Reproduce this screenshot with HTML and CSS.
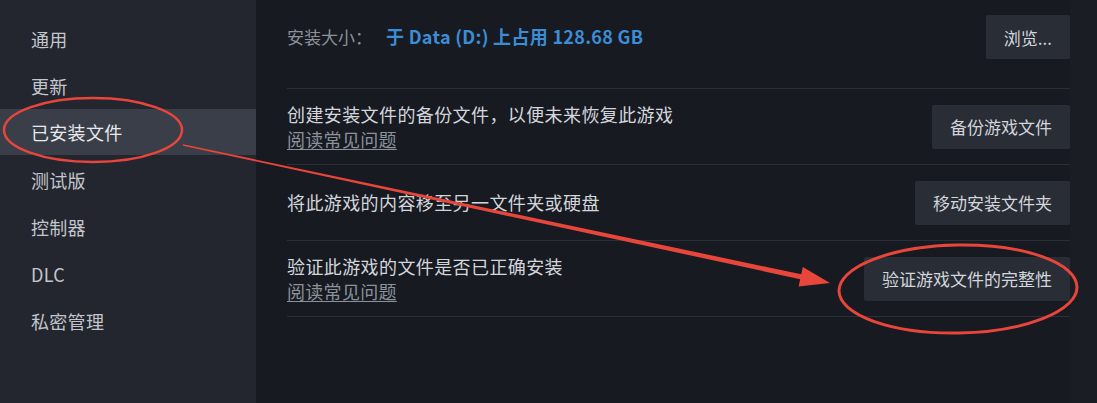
FILE: index.html
```html
<!DOCTYPE html>
<html lang="zh-CN">
<head>
<meta charset="utf-8">
<title>已安装文件</title>
<link rel="stylesheet" href="styles.css">
</head>
<body>
<div class="app">
  <nav class="sidebar">
    <div class="nav-item">通用</div>
    <div class="nav-item">更新</div>
    <div class="nav-item active">已安装文件</div>
    <div class="nav-item">测试版</div>
    <div class="nav-item">控制器</div>
    <div class="nav-item">DLC</div>
    <div class="nav-item">私密管理</div>
  </nav>
  <main class="content">
    <section class="row row-first">
      <div class="row-text">
        <span class="label">安装大小：</span><span class="value">于 Data (D:) 上占用 128.68 GB</span>
      </div>
      <button class="btn">浏览...</button>
    </section>
    <section class="row">
      <div class="row-text">
        <div class="desc">创建安装文件的备份文件，以便未来恢复此游戏</div>
        <a class="faq">阅读常见问题</a>
      </div>
      <button class="btn">备份游戏文件</button>
    </section>
    <section class="row">
      <div class="row-text">
        <div class="desc">将此游戏的内容移至另一文件夹或硬盘</div>
      </div>
      <button class="btn">移动安装文件夹</button>
    </section>
    <section class="row">
      <div class="row-text">
        <div class="desc">验证此游戏的文件是否已正确安装</div>
        <a class="faq">阅读常见问题</a>
      </div>
      <button class="btn">验证游戏文件的完整性</button>
    </section>
  </main>
  <div class="scroll-strip"></div>
</div>
<svg class="annotations" width="1097" height="403" viewBox="0 0 1097 403">
  <ellipse cx="93" cy="130" rx="89" ry="32" fill="none" stroke="#e8453b" stroke-width="2.5"/>
  <ellipse cx="958" cy="289" rx="119" ry="44" fill="none" stroke="#e8453b" stroke-width="3" transform="rotate(-1 958 289)"/>
  <polygon fill="#e8453b" points="183.16,144.27 801.22,274.25 802.79,266.92 830,283 798.61,286.48 800.18,279.15 182.84,145.73"/>
</svg>
</body>
</html>
```
FILE: styles.css
```css
* { box-sizing: border-box; }
html, body {
  margin: 0;
  padding: 0;
  width: 1097px;
  height: 403px;
  overflow: hidden;
  background: #171a21;
  font-family: "Noto Sans CJK SC", "Noto Sans", "Liberation Sans", sans-serif;
}
.app {
  display: flex;
  width: 1097px;
  height: 403px;
}
.sidebar {
  width: 256px;
  flex: none;
  background: #23262e;
  padding-top: 15px;
  display: flex;
  flex-direction: column;
}
.nav-item {
  height: 47px;
  display: flex;
  align-items: center;
  padding-left: 31px;
  font-size: 18px;
  letter-spacing: 0.3px;
  color: #c3c7cd;
}
.nav-item.active {
  background: #3a3e48;
  color: #e6e9ed;
  height: 46px;
  margin-bottom: 1px;
}
.content {
  flex: none;
  width: 814px;
  padding-left: 31px;
  background: #171a21;
}
.scroll-strip {
  flex: 1;
  background: #1a1d24;
}
.row {
  height: 76px;
  display: flex;
  align-items: center;
  justify-content: space-between;
  border-bottom: 1px solid #2b2f38;
}
.row-first {
  height: 89px;
  align-items: flex-start;
  padding-top: 15px;
}
.row-first .row-text {
  height: 44px;
  display: flex;
  align-items: center;
  padding-bottom: 2px;
}
.label {
  font-size: 17px;
  color: #8a929b;
  margin-right: 14px;
}
.value {
  font-size: 18px;
  color: #3c8dd6;
  font-weight: 700;
  letter-spacing: 0.3px;
}
.desc {
  font-size: 18px;
  letter-spacing: 0.4px;
  color: #d3d6db;
  line-height: 25px;
}
.faq {
  display: block;
  font-size: 18px;
  letter-spacing: 0.3px;
  line-height: 24px;
  color: #8a929b;
  text-decoration: underline;
  text-underline-offset: 2px;
}
.btn {
  height: 44px;
  padding: 0 18px;
  border: none;
  border-radius: 2px;
  background: #292d36;
  color: #d3d6db;
  font-family: inherit;
  font-size: 17px;
}
.annotations {
  position: absolute;
  left: 0;
  top: 0;
  pointer-events: none;
}
```
